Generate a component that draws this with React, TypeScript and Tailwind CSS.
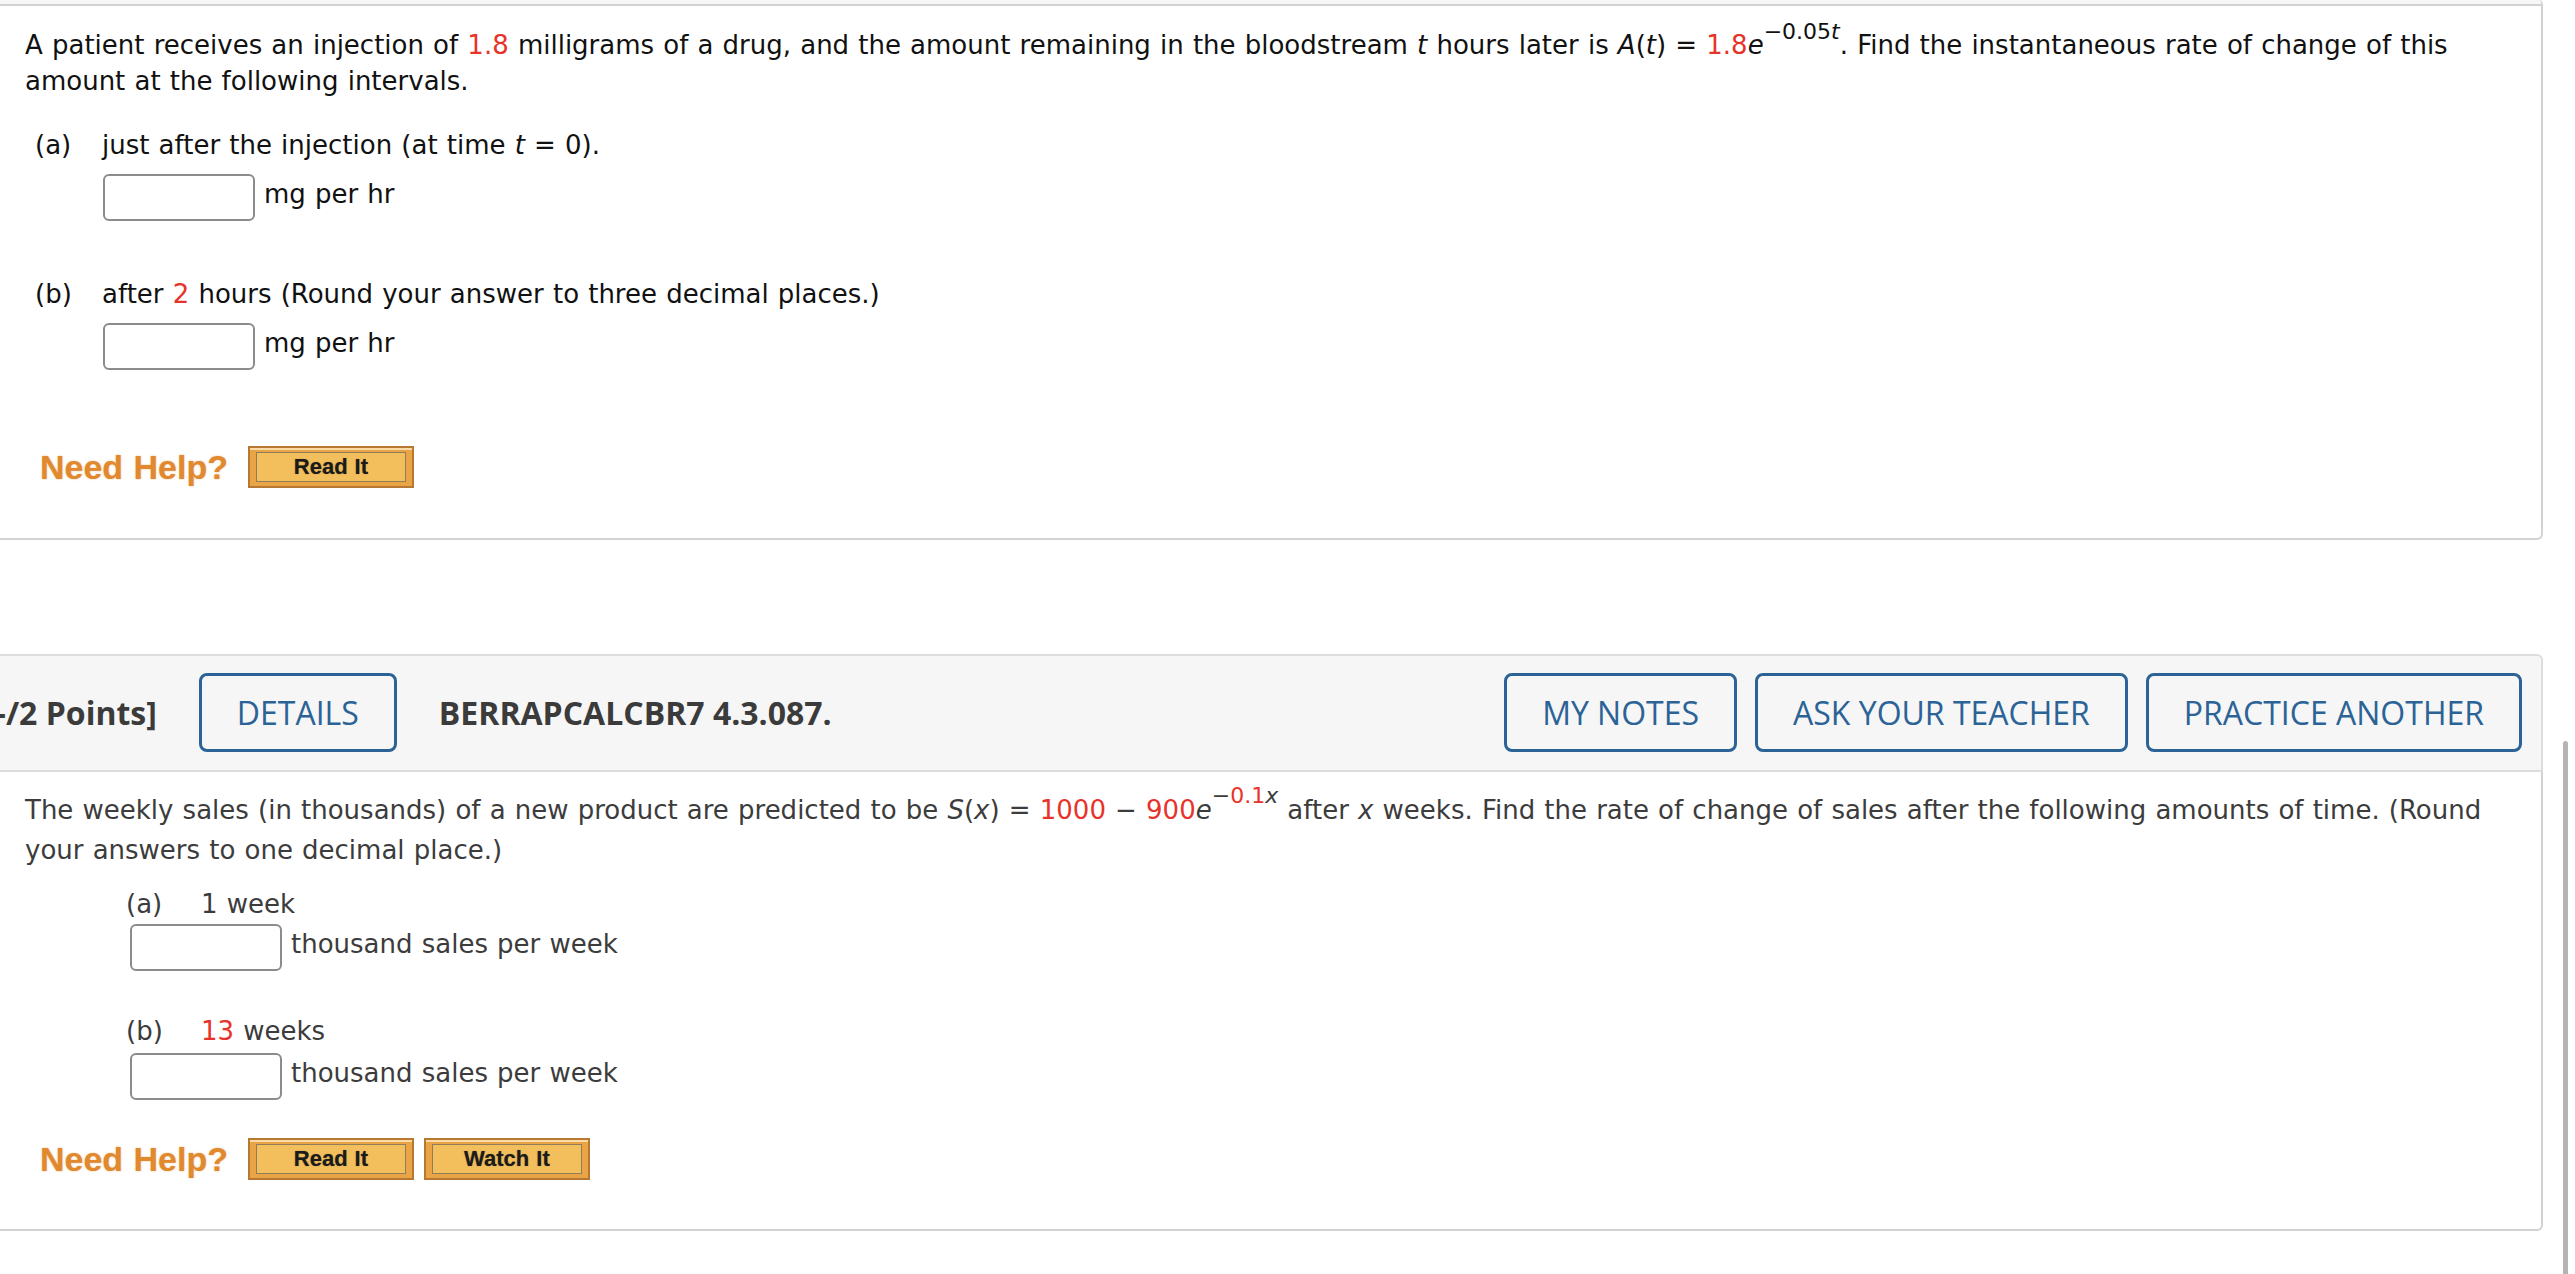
import React from 'react';

// fonts: DejaVu Sans stands in for Verdana, Open Sans for the header, Liberation Sans for the help bar
const body = "font-['DejaVu_Sans',Verdana,sans-serif] text-[26px] [word-spacing:0.9px]";

const Red = ({ children }: { children: React.ReactNode }) => (
    <span className="text-[#e8332a]">{children}</span>
);

const Em = ({ children }: { children: React.ReactNode }) => (
    <span className="italic">{children}</span>
);

const AnswerBox = () => (
    <input
        type="text"
        className="h-[47px] w-[152px] shrink-0 rounded-[6px] border-2 border-[#8c8c8c] bg-white outline-none"
    />
);

const HelpButton = ({ label }: { label: string }) => (
    <div className="h-[42px] w-[166px] border-2 border-[#b67833] bg-[#e9a545] px-[6px] py-[4px] shadow-[inset_0_2px_0_#fbdaa8]">
        <div className="flex h-full items-center justify-center border border-[#8f7d5c] bg-[#f3be5c] font-['Liberation_Sans',Arial,sans-serif] text-[22px] font-bold leading-none text-[#1b1b1b] [text-shadow:0_0_1px_rgba(0,0,0,0.45)]">
            {label}
        </div>
    </div>
);

const NeedHelp = ({ buttons }: { buttons: string[] }) => (
    <div className="ml-[15px] flex items-center gap-[20px]">
        <span className="font-['Liberation_Sans',Arial,sans-serif] text-[34px] font-bold leading-none text-[#e0892f] [text-shadow:0_0_2px_rgba(224,137,47,0.55)]">
            Need Help?
        </span>
        <div className="flex gap-[10px]">
            {buttons.map((b) => (
                <HelpButton key={b} label={b} />
            ))}
        </div>
    </div>
);

const HeaderButton = ({ label }: { label: string }) => (
    <div className="flex h-[79px] items-center rounded-[8px] border-[3px] border-[#2c6396] px-[35px] text-[32px] text-[#2c6396]">
        {label}
    </div>
);

const FirstProblem = () => (
    <section className="w-[2563px]">
        {/* header of this card is scrolled away, only a sliver is left */}
        <div className="h-[4px] rounded-tr-[6px] border-r-2 border-[#dcdcdc] bg-[#f6f6f6]" />
        <div
            className={`rounded-br-[6px] border-t-2 border-r-2 border-b-2 border-[#d2d2d2] bg-white pt-[21px] pb-[50px] pl-[45px] text-[#111111] ${body}`}
        >
            <p className="leading-[36px]">
                A patient receives an injection of <Red>1.8</Red> milligrams of a drug, and the amount
                remaining in the bloodstream <Em>t</Em> hours later is <Em>A</Em>(<Em>t</Em>) ={' '}
                <Red>1.8</Red>
                <Em>e</Em>
                <sup className="top-[-0.68em] text-[22px]">
                    −0.05<Em>t</Em>
                </sup>
                . Find the instantaneous rate of change of this
                <br />
                amount at the following intervals.
            </p>

            <div className="mt-[28px] ml-[10px] flex leading-[36px]">
                <span className="w-[67px]">(a)</span>
                <span>
                    just after the injection (at time <Em>t</Em> = 0).
                </span>
            </div>
            <div className="mt-[11px] ml-[78px] flex items-start">
                <AnswerBox />
                <span className="mt-[2px] ml-[9px] leading-[36px]">mg per hr</span>
            </div>

            <div className="mt-[55px] ml-[10px] flex leading-[36px]">
                <span className="w-[67px]">(b)</span>
                <span>
                    after <Red>2</Red> hours (Round your answer to three decimal places.)
                </span>
            </div>
            <div className="mt-[11px] ml-[78px] flex items-start">
                <AnswerBox />
                <span className="mt-[2px] ml-[9px] leading-[36px]">mg per hr</span>
            </div>

            <div className="mt-[76px]">
                <NeedHelp buttons={['Read It']} />
            </div>
        </div>
    </section>
);

const SecondProblem = () => (
    <section className="mt-[114px] w-[2563px]">
        <div className="flex items-center rounded-tr-[6px] border-t-2 border-r-2 border-b-2 border-[#dddddd] bg-[#f6f6f6] pt-[17px] pr-[19px] pb-[18px] pl-[5px] font-['Open_Sans',sans-serif]">
            <div className="flex items-center gap-[42px]">
                <span className="text-[32px] font-bold text-[#3b3b3b]">[-/2 Points]</span>
                <HeaderButton label="DETAILS" />
                <span className="text-[32px] font-bold text-[#3b3b3b]">BERRAPCALCBR7 4.3.087.</span>
            </div>
            <div className="ml-auto flex gap-[18px]">
                <HeaderButton label="MY NOTES" />
                <HeaderButton label="ASK YOUR TEACHER" />
                <HeaderButton label="PRACTICE ANOTHER" />
            </div>
        </div>
        <div
            className={`rounded-br-[6px] border-r-2 border-b-2 border-[#d2d2d2] bg-white pt-[18px] pb-[49px] pl-[45px] text-[#3c3c3c] ${body}`}
        >
            <p className="leading-[40px]">
                The weekly sales (in thousands) of a new product are predicted to be <Em>S</Em>(
                <Em>x</Em>) = <Red>1000</Red> − <Red>900</Red>
                <Em>e</Em>
                <sup className="top-[-0.73em] text-[22px]">
                    −<Red>0.1</Red>
                    <Em>x</Em>
                </sup>{' '}
                after <Em>x</Em> weeks. Find the rate of change of sales after the following amounts of
                time. (Round
                <br />
                your answers to one decimal place.)
            </p>

            <div className="mt-[16px] ml-[101px] flex leading-[36px]">
                <span className="w-[75px]">(a)</span>
                <span>1 week</span>
            </div>
            <div className="mt-[2px] ml-[105px] flex items-start">
                <AnswerBox />
                <span className="mt-[2px] ml-[9px] leading-[36px]">thousand sales per week</span>
            </div>

            <div className="mt-[42px] ml-[101px] flex leading-[36px]">
                <span className="w-[75px]">(b)</span>
                <span>
                    <Red>13</Red> weeks
                </span>
            </div>
            <div className="mt-[4px] ml-[105px] flex items-start">
                <AnswerBox />
                <span className="mt-[2px] ml-[9px] leading-[36px]">thousand sales per week</span>
            </div>

            <div className="mt-[38px]">
                <NeedHelp buttons={['Read It', 'Watch It']} />
            </div>
        </div>
    </section>
);

export default function App() {
    return (
        <div className="relative h-[1274px] w-[2575px] overflow-hidden bg-white">
            <div className="ml-[-20px]">
                <FirstProblem />
                <SecondProblem />
            </div>
            {/* overlay scrollbar of the browser */}
            <div className="absolute top-[741px] bottom-0 left-[2563px] w-[5px] rounded-t-full bg-[#b4b4b4]" />
        </div>
    );
}
